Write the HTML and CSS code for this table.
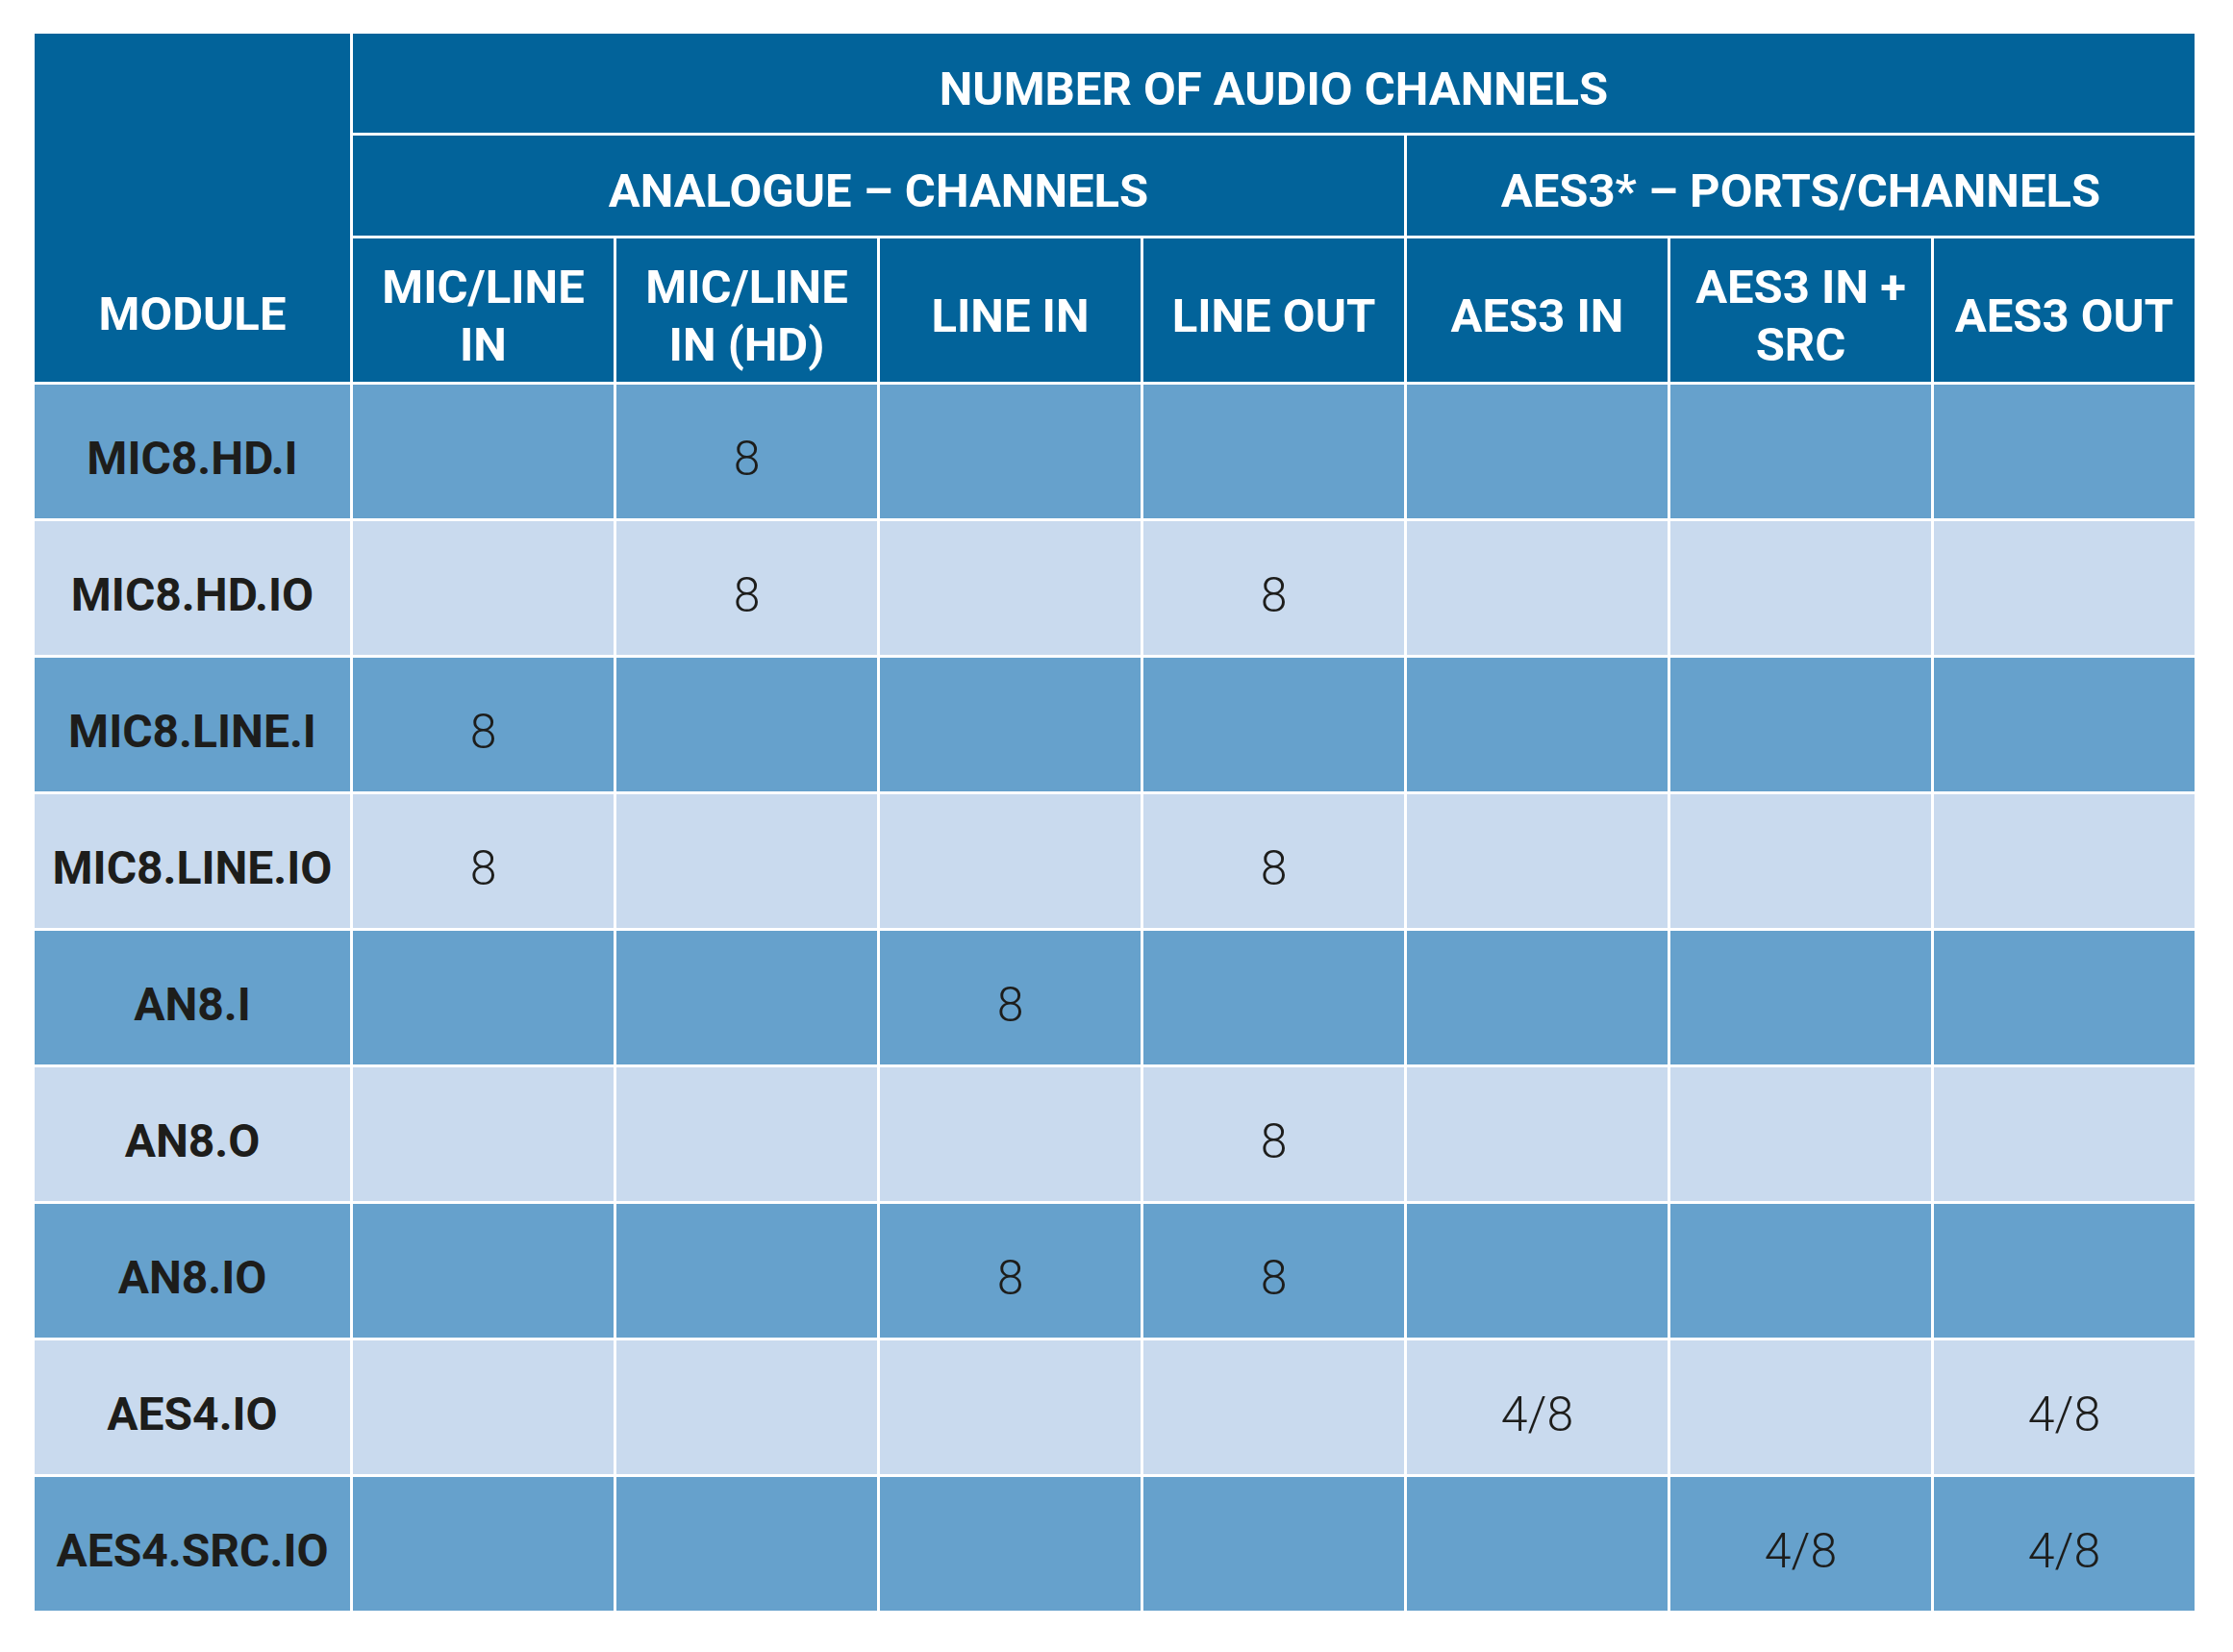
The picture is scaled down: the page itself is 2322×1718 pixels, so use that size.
FILE: index.html
```html
<!DOCTYPE html>
<html lang="en">
<head>
<meta charset="utf-8">
<title>Number of audio channels</title>
<link rel="stylesheet" href="styles.css">
</head>
<body>
<div class="page">
  <div class="grid">
    <div class="h module">MODULE</div>
    <div class="h top">NUMBER OF AUDIO CHANNELS</div>
    <div class="h analog">ANALOGUE – CHANNELS</div>
    <div class="h aes">AES3* – PORTS/CHANNELS</div>
    <div class="h">MIC/LINE<br>IN</div>
    <div class="h">MIC/LINE<br>IN (HD)</div>
    <div class="h">LINE IN</div>
    <div class="h">LINE OUT</div>
    <div class="h">AES3 IN</div>
    <div class="h">AES3 IN +<br>SRC</div>
    <div class="h">AES3 OUT</div>

    <div class="c dk name">MIC8.HD.I</div><div class="c dk"></div><div class="c dk">8</div><div class="c dk"></div><div class="c dk"></div><div class="c dk"></div><div class="c dk"></div><div class="c dk"></div>
    <div class="c lt name">MIC8.HD.IO</div><div class="c lt"></div><div class="c lt">8</div><div class="c lt"></div><div class="c lt">8</div><div class="c lt"></div><div class="c lt"></div><div class="c lt"></div>
    <div class="c dk name">MIC8.LINE.I</div><div class="c dk">8</div><div class="c dk"></div><div class="c dk"></div><div class="c dk"></div><div class="c dk"></div><div class="c dk"></div><div class="c dk"></div>
    <div class="c lt name">MIC8.LINE.IO</div><div class="c lt">8</div><div class="c lt"></div><div class="c lt"></div><div class="c lt">8</div><div class="c lt"></div><div class="c lt"></div><div class="c lt"></div>
    <div class="c dk name">AN8.I</div><div class="c dk"></div><div class="c dk"></div><div class="c dk">8</div><div class="c dk"></div><div class="c dk"></div><div class="c dk"></div><div class="c dk"></div>
    <div class="c lt name">AN8.O</div><div class="c lt"></div><div class="c lt"></div><div class="c lt"></div><div class="c lt">8</div><div class="c lt"></div><div class="c lt"></div><div class="c lt"></div>
    <div class="c dk name">AN8.IO</div><div class="c dk"></div><div class="c dk"></div><div class="c dk">8</div><div class="c dk">8</div><div class="c dk"></div><div class="c dk"></div><div class="c dk"></div>
    <div class="c lt name">AES4.IO</div><div class="c lt"></div><div class="c lt"></div><div class="c lt"></div><div class="c lt"></div><div class="c lt">4/8</div><div class="c lt"></div><div class="c lt">4/8</div>
    <div class="c dk name">AES4.SRC.IO</div><div class="c dk"></div><div class="c dk"></div><div class="c dk"></div><div class="c dk"></div><div class="c dk"></div><div class="c dk">4/8</div><div class="c dk">4/8</div>
  </div>
</div>
</body>
</html>
```

FILE: styles.css
```css
html, body {
  margin: 0;
  padding: 0;
  background: #ffffff;
}

.page {
  padding: 35px 0 0 36px;
}

.grid {
  display: grid;
  grid-template-columns: 328px repeat(7, 271px);
  grid-template-rows: 103px 104px 149px repeat(9, 139px);
  gap: 3px;
  width: max-content;
  font-family: Roboto, "Liberation Sans", Arial, sans-serif;
}

.h,
.c {
  display: flex;
  align-items: center;
  justify-content: center;
  text-align: center;
  padding-top: 12px;
  box-sizing: border-box;
}

.h {
  background: #02639a;
  color: #ffffff;
  font-weight: 700;
  font-size: 49px;
  line-height: 60px;
}

.module {
  grid-column: 1;
  grid-row: 1 / 4;
  align-items: flex-end;
  padding-bottom: 40px;
}

.top {
  grid-column: 2 / 9;
  grid-row: 1;
}

.analog {
  grid-column: 2 / 6;
  grid-row: 2;
}

.aes {
  grid-column: 6 / 9;
  grid-row: 2;
}

.c {
  color: #1d1d1b;
  font-size: 50px;
  font-weight: 300;
  line-height: 1;
  padding-top: 15px;
}

.c.name {
  font-weight: 700;
  font-size: 48px;
}

.dk {
  background: #66a1cc;
}

.lt {
  background: #c9daee;
}
```
